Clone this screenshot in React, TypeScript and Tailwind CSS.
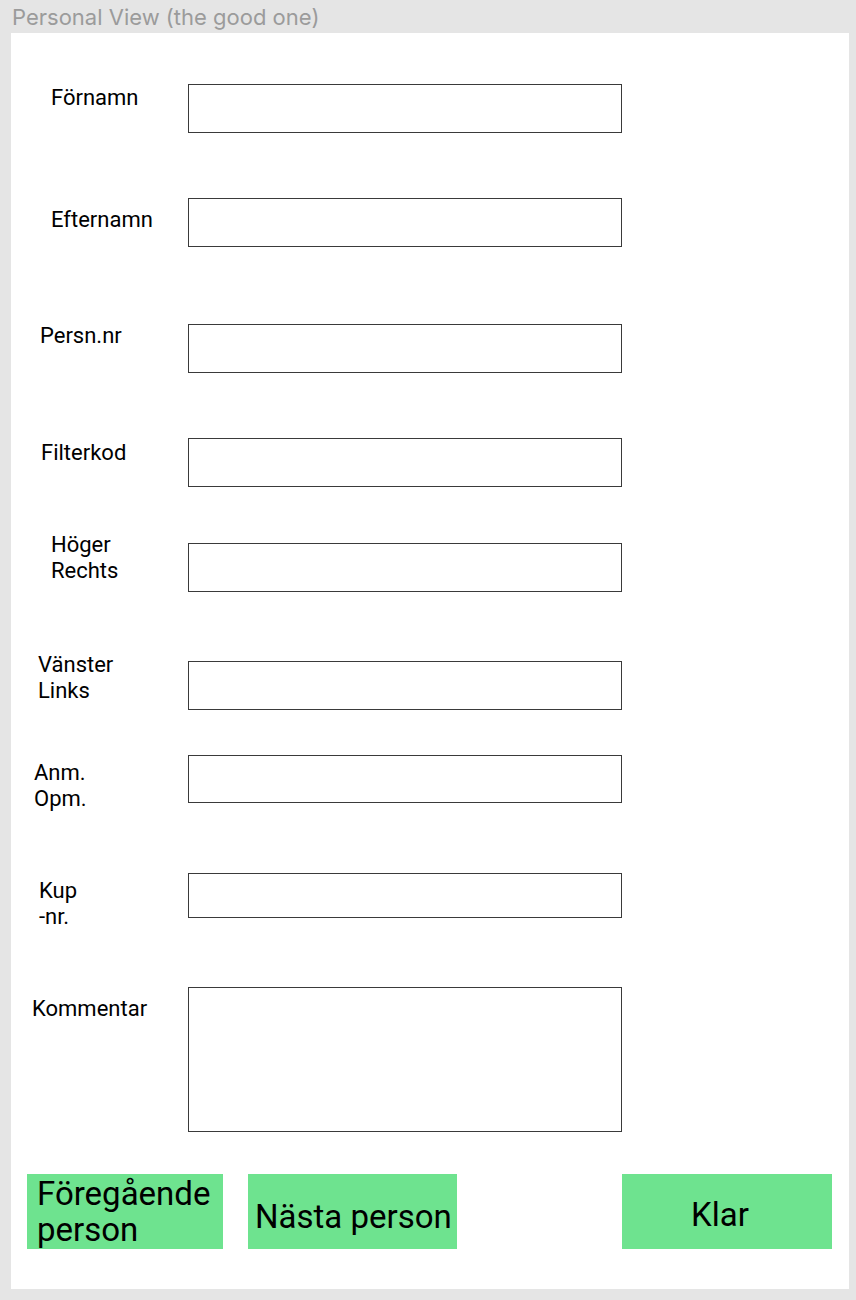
import React from "react";

type Row = {
  lines: string[];
  rowMt: number;
  rowH: number;
  labelPl: number;
  labelMt: number;
  inputMt: number;
  inputH: number;
};

const rows: Row[] = [
  { lines: ["Förnamn"], rowMt: 0, rowH: 49, labelPl: 40, labelMt: 1, inputMt: 0, inputH: 49 },
  { lines: ["Efternamn"], rowMt: 65, rowH: 49, labelPl: 40, labelMt: 9, inputMt: 0, inputH: 49 },
  { lines: ["Persn.nr"], rowMt: 76, rowH: 50, labelPl: 29, labelMt: 0, inputMt: 1, inputH: 49 },
  { lines: ["Filterkod"], rowMt: 65, rowH: 49, labelPl: 30, labelMt: 2, inputMt: 0, inputH: 49 },
  { lines: ["Höger", "Rechts"], rowMt: 45, rowH: 60, labelPl: 40, labelMt: 0, inputMt: 11, inputH: 49 },
  { lines: ["Vänster", "Links"], rowMt: 60, rowH: 58, labelPl: 27, labelMt: 0, inputMt: 9, inputH: 49 },
  { lines: ["Anm.", "Opm."], rowMt: 45, rowH: 48, labelPl: 23, labelMt: 5, inputMt: 0, inputH: 48 },
  { lines: ["Kup", "-nr."], rowMt: 70, rowH: 45, labelPl: 28, labelMt: 5, inputMt: 0, inputH: 45 },
  { lines: ["Kommentar"], rowMt: 69, rowH: 145, labelPl: 21, labelMt: 9, inputMt: 0, inputH: 145 },
];

export default function App() {
  return (
    <div
      className="w-full h-[1300px] bg-[#e5e5e5] overflow-hidden"
      style={{ fontFamily: "Roboto, 'Noto Sans', sans-serif" }}
    >
      <div
        className="h-[33px] pt-[4px] pl-[12px] text-[22px] leading-[27px] text-[#9b9b9b] whitespace-nowrap"
        style={{ fontFamily: "Inter, 'Noto Sans', sans-serif" }}
      >
        Personal View (the good one)
      </div>
      <div className="ml-[11px] w-[838px] h-[1256px] bg-white pt-[51px] flex flex-col">
        {rows.map((r, i) => (
          <div
            key={i}
            className="flex items-start shrink-0"
            style={{ marginTop: r.rowMt, height: r.rowH }}
          >
            <div className="w-[177px] shrink-0" style={{ paddingLeft: r.labelPl, marginTop: r.labelMt }}>
              <div className="text-[22px] leading-[26px] text-black whitespace-nowrap">
                {r.lines.map((l, j) => (
                  <div key={j}>{l}</div>
                ))}
              </div>
            </div>
            <div
              className="w-[434px] shrink-0 border border-[#3a3a3a] bg-white"
              style={{ marginTop: r.inputMt, height: r.inputH }}
            />
          </div>
        ))}
        <div className="flex items-start mt-[42px] pl-[16px] h-[75px] shrink-0">
          <div className="w-[196px] h-[75px] bg-[#6ee38f] pl-[10px] pt-[2px] text-[33px] leading-[36px] text-black">
            Föregående person
          </div>
          <div className="ml-[25px] w-[209px] h-[75px] bg-[#6ee38f] pl-[7px] pt-[23px] text-[33px] leading-[39px] text-black whitespace-nowrap">
            Nästa person
          </div>
          <div className="ml-[165px] w-[210px] h-[75px] bg-[#6ee38f] pl-[69px] pt-[21px] text-[33px] leading-[39px] text-black whitespace-nowrap">
            Klar
          </div>
        </div>
      </div>
    </div>
  );
}
